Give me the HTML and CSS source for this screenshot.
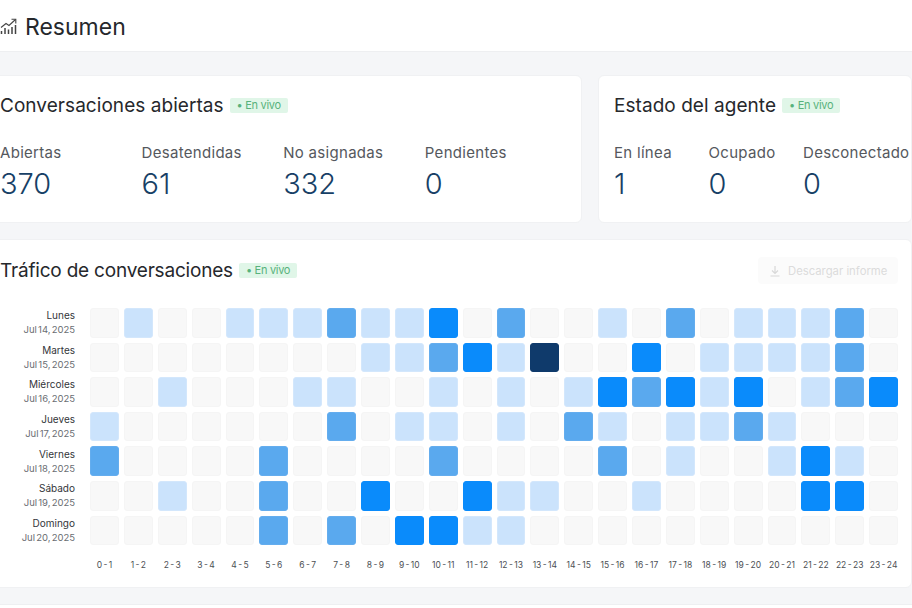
FILE: index.html
```html
<!DOCTYPE html>
<html lang="es">

<head>
    <meta charset="UTF-8">
    <meta name="viewport" content="width=device-width, initial-scale=1.0">
    <title>Resumen</title>

    <link rel="stylesheet" href="styles.css">
</head>

<body>
    <header class="top">
        <svg class="top-icon" width="17" height="17" viewBox="0 0 17 17" fill="none" stroke="#444" stroke-width="1.1">
            <path d="M1 9.5 L6 5.5 L9 7.5 L15.5 1.5" />
            <path d="M11.5 1.2 H15.8 V5.5" />
            <path d="M1.5 16 V13 M5 16 V10 M8.5 16 V11.5 M12 16 V9 M15.5 16 V7" stroke-width="1.5" />
        </svg>
        <h1>Resumen</h1>
    </header>

    <main class="main">
        <div class="cards">
            <section class="card">
                <div class="title-row">
                    <h2>Conversaciones abiertas</h2>
                    <span class="live">• En vivo</span>
                </div>
                <div class="stats stats-open">
                    <div><p class="stat-label">Abiertas</p><p class="stat-value">370</p></div>
                    <div><p class="stat-label">Desatendidas</p><p class="stat-value">61</p></div>
                    <div><p class="stat-label">No asignadas</p><p class="stat-value">332</p></div>
                    <div><p class="stat-label">Pendientes</p><p class="stat-value">0</p></div>
                </div>
            </section>
            <section class="card">
                <div class="title-row">
                    <h2>Estado del agente</h2>
                    <span class="live">• En vivo</span>
                </div>
                <div class="stats stats-agent">
                    <div><p class="stat-label">En línea</p><p class="stat-value">1</p></div>
                    <div><p class="stat-label">Ocupado</p><p class="stat-value">0</p></div>
                    <div><p class="stat-label">Desconectado</p><p class="stat-value">0</p></div>
                </div>
            </section>
        </div>

        <section class="traffic">
            <div class="traffic-head">
                <div class="title-row">
                    <h2>Tráfico de conversaciones</h2>
                    <span class="live">• En vivo</span>
                </div>
                <button class="download">
                    <svg width="12" height="12" viewBox="0 0 12 12" fill="none" stroke="#d8d8d8" stroke-width="1.2">
                        <path d="M6 1 V8 M3 5.5 L6 8.5 L9 5.5 M1.5 11 H10.5" />
                    </svg>
                    Descargar informe
                </button>
            </div>

            <div class="heat">
                <div class="day"><b>Lunes</b><span>Jul 14, 2025</span></div>
                <i></i><i class="l1"></i><i></i><i></i><i class="l1"></i><i class="l1"></i><i class="l1"></i><i class="l2"></i><i class="l1"></i><i class="l1"></i><i class="l3"></i><i></i><i class="l2"></i><i></i><i></i><i class="l1"></i><i></i><i class="l2"></i><i></i><i class="l1"></i><i class="l1"></i><i class="l1"></i><i class="l2"></i><i></i>

                <div class="day"><b>Martes</b><span>Jul 15, 2025</span></div>
                <i></i><i></i><i></i><i></i><i></i><i></i><i></i><i></i><i class="l1"></i><i class="l1"></i><i class="l2"></i><i class="l3"></i><i class="l1"></i><i class="l4"></i><i></i><i></i><i class="l3"></i><i></i><i class="l1"></i><i class="l1"></i><i class="l1"></i><i class="l1"></i><i class="l2"></i><i></i>

                <div class="day"><b>Miércoles</b><span>Jul 16, 2025</span></div>
                <i></i><i></i><i class="l1"></i><i></i><i></i><i></i><i class="l1"></i><i class="l1"></i><i></i><i></i><i class="l1"></i><i></i><i class="l1"></i><i></i><i class="l1"></i><i class="l3"></i><i class="l2"></i><i class="l3"></i><i class="l1"></i><i class="l3"></i><i></i><i class="l1"></i><i class="l2"></i><i class="l3"></i>

                <div class="day"><b>Jueves</b><span>Jul 17, 2025</span></div>
                <i class="l1"></i><i></i><i></i><i></i><i></i><i></i><i></i><i class="l2"></i><i></i><i class="l1"></i><i class="l1"></i><i></i><i class="l1"></i><i></i><i class="l2"></i><i class="l1"></i><i></i><i class="l1"></i><i class="l1"></i><i class="l2"></i><i class="l1"></i><i></i><i></i><i></i>

                <div class="day"><b>Viernes</b><span>Jul 18, 2025</span></div>
                <i class="l2"></i><i></i><i></i><i></i><i></i><i class="l2"></i><i></i><i></i><i></i><i></i><i class="l2"></i><i></i><i></i><i></i><i></i><i class="l2"></i><i></i><i class="l1"></i><i></i><i></i><i class="l1"></i><i class="l3"></i><i class="l1"></i><i></i>

                <div class="day"><b>Sábado</b><span>Jul 19, 2025</span></div>
                <i></i><i></i><i class="l1"></i><i></i><i></i><i class="l2"></i><i></i><i></i><i class="l3"></i><i></i><i></i><i class="l3"></i><i class="l1"></i><i class="l1"></i><i></i><i></i><i class="l1"></i><i></i><i></i><i></i><i></i><i class="l3"></i><i class="l3"></i><i></i>

                <div class="day"><b>Domingo</b><span>Jul 20, 2025</span></div>
                <i></i><i></i><i></i><i></i><i></i><i class="l2"></i><i></i><i class="l2"></i><i></i><i class="l3"></i><i class="l3"></i><i class="l1"></i><i class="l1"></i><i></i><i></i><i></i><i></i><i></i><i></i><i></i><i></i><i></i><i></i><i></i>

                <div></div>
                <em>0 - 1</em><em>1 - 2</em><em>2 - 3</em><em>3 - 4</em><em>4 - 5</em><em>5 - 6</em><em>6 - 7</em><em>7 - 8</em><em>8 - 9</em><em>9 - 10</em><em>10 - 11</em><em>11 - 12</em><em>12 - 13</em><em>13 - 14</em><em>14 - 15</em><em>15 - 16</em><em>16 - 17</em><em>17 - 18</em><em>18 - 19</em><em>19 - 20</em><em>20 - 21</em><em>21 - 22</em><em>22 - 23</em><em>23 - 24</em>
            </div>
        </section>

        <section class="next"></section>
    </main>
</body>

</html>
```

FILE: styles.css
```css
* {
    padding: 0;
    margin: 0;
    box-sizing: border-box;
}

html,
body {
    height: 608px;
    overflow: hidden;
}

body {
    font-family: Inter, "Liberation Sans", sans-serif;
    background-color: #f5f6f8;
    color: #26282c;
}

.top {
    display: flex;
    align-items: center;
    gap: 8px;
    height: 52px;
    padding-top: 2px;
    background-color: #fff;
    border-bottom: 1px solid #eeeff1;
}

.top h1 {
    font-size: 23px;
    font-weight: 400;
}

.main {
    width: 928px;
    margin-left: -16px;
    padding-top: 23px;
}

.cards {
    display: grid;
    grid-template-columns: 598px 314px;
    gap: 16px;
}

.card {
    height: 148px;
    padding: 18px 15px 0;
    background-color: #fff;
    border: 1px solid #f0f1f3;
    border-radius: 6px;
}

.title-row {
    display: flex;
    align-items: center;
    gap: 6px;
}

h2 {
    font-size: 19px;
    font-weight: 400;
    letter-spacing: 0.05px;
}

.traffic h2 {
    letter-spacing: -0.2px;
}

.live {
    padding: 0 7px;
    height: 15px;
    font-size: 11px;
    line-height: 15px;
    color: #58b27c;
    letter-spacing: -0.3px;
    background-color: #e0f6e8;
    border-radius: 2px;
}

.stats {
    display: grid;
    margin-top: 27px;
}

.stats-open {
    grid-template-columns: repeat(4, 141.6px);
}

.stats-agent {
    grid-template-columns: repeat(3, 94.5px);
}

.stat-label {
    font-size: 15px;
    line-height: 18px;
    letter-spacing: 0.3px;
    color: #55585d;
    white-space: nowrap;
}

.stat-value {
    margin-top: 4px;
    font-size: 29px;
    line-height: 36px;
    font-weight: 300;
    color: #173f66;
}

.traffic {
    height: 349px;
    margin-top: 16px;
    padding: 17px 13px 0 15px;
    background-color: #fff;
    border: 1px solid #f0f1f3;
    border-radius: 6px;
}

.traffic-head {
    display: flex;
    align-items: center;
    justify-content: space-between;
}

.download {
    display: flex;
    align-items: center;
    gap: 7px;
    width: 140px;
    height: 27px;
    padding: 0 11px;
    font: 11.3px Inter, "Liberation Sans", sans-serif;
    color: #dcdcdc;
    white-space: nowrap;
    background-color: #fbfbfb;
    border: 0;
    border-radius: 4px;
}

.download svg {
    flex-shrink: 0;
}

.heat {
    display: grid;
    grid-template-columns: 85px repeat(24, 1fr);
    grid-auto-rows: 29.6px;
    gap: 5px;
    margin-top: 24px;
}

.heat i {
    background-color: #f8f8f8;
    border: 1px solid #f5f5f5;
    border-radius: 3px;
}

.heat .l1 {
    background-color: #cbe3fc;
    border-color: #d3e7fc;
}

.heat .l2 {
    background-color: #5aa9ee;
    border-color: #64adee;
}

.heat .l3 {
    background-color: #0a8bfb;
    border-color: #0a8bfb;
}

.heat .l4 {
    background-color: #0f3a6b;
    border-color: #0f3a6b;
}

.day {
    display: flex;
    flex-direction: column;
    align-items: flex-end;
    justify-content: center;
    gap: 1px;
    padding-right: 10px;
    font-size: 10px;
    line-height: 13px;
    white-space: nowrap;
}

.day b {
    font-weight: 400;
    color: #33363a;
}

.day span {
    font-size: 9.5px;
    word-spacing: -1.5px;
    color: #6a6d72;
}

.heat em {
    margin-top: 9px;
    font-style: normal;
    font-size: 8.5px;
    line-height: 12px;
    word-spacing: -1px;
    text-align: center;
    white-space: nowrap;
    color: #4c4f54;
}

.next {
    height: 4px;
    margin-top: 16px;
    background-color: #fff;
    border-top: 1px solid #eeeff1;
}
```
